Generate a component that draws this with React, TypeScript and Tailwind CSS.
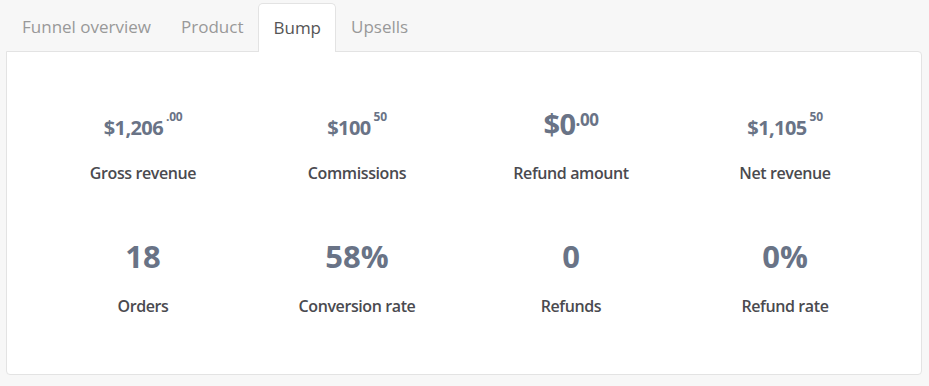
import { ReactNode } from 'react';

const tabs = ['Funnel overview', 'Product', 'Bump', 'Upsells'];

type Stat = { value: ReactNode; label: string };

function Money({ whole, cents, big }: { whole: string; cents: string; big?: boolean }) {
  if (big) {
    return (
      <span className="inline-flex items-start text-[29px] leading-none tracking-[-0.5px]">
        {whole}
        <span className="text-[17px] mt-[2px] tracking-tight">.{cents}</span>
      </span>
    );
  }
  return (
    <span className="inline-flex items-start text-[20px] leading-none tracking-[-0.6px]">
      {whole}
      <span className="text-[12px] -mt-[7px] ml-[3px] tracking-tight">{cents === '00' ? '.00' : cents}</span>
    </span>
  );
}

const revenue: Stat[] = [
  { value: <Money whole="$1,206" cents="00" />, label: 'Gross revenue' },
  { value: <Money whole="$100" cents="50" />, label: 'Commissions' },
  { value: <Money whole="$0" cents="00" big />, label: 'Refund amount' },
  { value: <Money whole="$1,105" cents="50" />, label: 'Net revenue' },
];

const counts: Stat[] = [
  { value: '18', label: 'Orders' },
  { value: '58%', label: 'Conversion rate' },
  { value: '0', label: 'Refunds' },
  { value: '0%', label: 'Refund rate' },
];

export default function App() {
  return (
    <div className="min-h-[386px] bg-[#f7f7f7] pt-[3px]" style={{ fontFamily: '"Open Sans", "Noto Sans", sans-serif' }}>
      {/* tabs */}
      <div className="flex pl-[7px] relative z-10">
        {tabs.map((t) => (
          <div
            key={t}
            className={
              t === 'Bump'
                ? 'h-[49px] -mb-px px-[14px] flex items-center text-[17px] text-[#555] bg-white border border-b-0 border-[#e3e3e3] rounded-t-[5px]'
                : 'h-[48px] px-[15px] flex items-center text-[17px] text-[#999]'
            }
          >
            {t}
          </div>
        ))}
      </div>

      <div className="ml-[6px] w-[916px] h-[324px] bg-white border border-[#e3e3e3] rounded-b-[4px] rounded-tr-[4px] px-[29px] pt-[44px]">
        <div className="grid grid-cols-4">
          {revenue.map((s) => (
            <div key={s.label} className="flex flex-col items-center">
              <div className="h-[42px] flex items-end font-bold text-[#697386]">{s.value}</div>
              <div className="mt-[23px] text-[16px] font-semibold text-[#4a4a4f] tracking-[-0.4px]">{s.label}</div>
            </div>
          ))}
        </div>
        <div className="grid grid-cols-4 mt-[56px]">
          {counts.map((s) => (
            <div key={s.label} className="flex flex-col items-center">
              <div className="text-[31px] leading-none font-bold text-[#697386]">{s.value}</div>
              <div className="mt-[22px] text-[16px] font-semibold text-[#4a4a4f] tracking-[-0.4px]">{s.label}</div>
            </div>
          ))}
        </div>
      </div>
    </div>
  );
}
